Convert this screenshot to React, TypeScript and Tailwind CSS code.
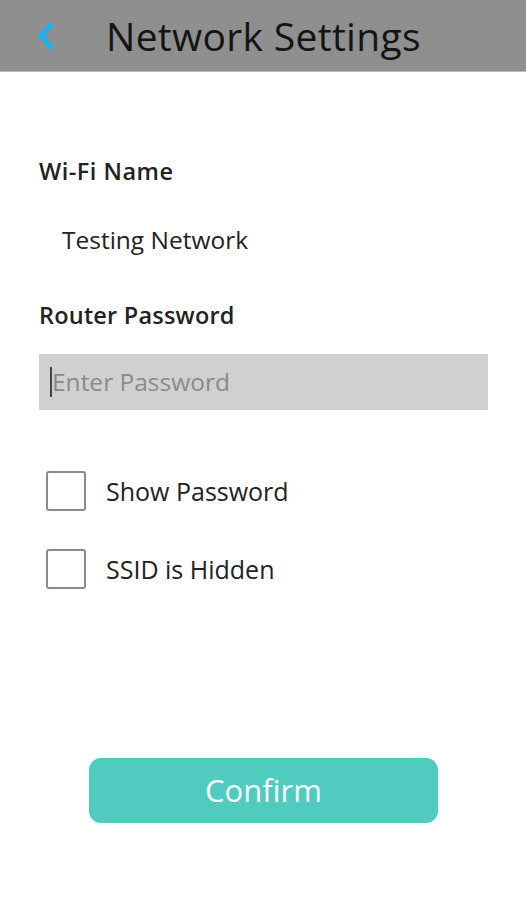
import React from "react";

export default function App() {
  return (
    <div className="w-[526px] h-[900px] bg-white flex flex-col" style={{ fontFamily: '"Open Sans", "Noto Sans", sans-serif' }}>
      <div className="h-[72px] bg-[#8f8f8f] flex items-center border-b border-[#bdbdbd]">
        <svg width="22" height="30" viewBox="0 0 22 30" className="ml-[35px]">
          <path d="M17 3 L6 15 L17 27" stroke="#1ab2f0" strokeWidth="5" fill="none" strokeLinejoin="miter" />
        </svg>
        <div className="ml-[49px] text-[39px] text-[#141414] leading-none tracking-[0.3px]">Network Settings</div>
      </div>
      <div className="px-[39px] flex flex-col">
        <div className="mt-[85px] text-[23.5px] font-semibold text-[#222] leading-[28px] tracking-[0.5px]">Wi-Fi Name</div>
        <div className="mt-[41px] ml-[23px] text-[24.5px] text-[#222] leading-[28px]">Testing Network</div>
        <div className="mt-[47px] text-[23.5px] font-semibold text-[#222] leading-[28px] tracking-[0.2px]">Router Password</div>
        <div className="mt-[25px] w-[449px] h-[56px] bg-[#d0d0d0] flex items-center pl-[11px]">
          <div className="w-[2px] h-[30px] bg-[#444]" />
          <span className="text-[24.5px] text-[#8a8a8a] leading-[28px]">Enter Password</span>
        </div>
        <div className="mt-[61px] flex items-center ml-[7px]">
          <div className="w-[40px] h-[40px] border-2 border-[#8a8a8a] rounded-[3px] bg-white" />
          <span className="ml-[20px] text-[25px] text-[#222] leading-[28px]">Show Password</span>
        </div>
        <div className="mt-[38px] flex items-center ml-[7px]">
          <div className="w-[40px] h-[40px] border-2 border-[#8a8a8a] rounded-[3px] bg-white" />
          <span className="ml-[20px] text-[25px] text-[#222] leading-[28px]">SSID is Hidden</span>
        </div>
      </div>
      <div className="mt-[169px] flex justify-center">
        <button className="w-[349px] h-[65px] ml-[1px] bg-[#4fcbc0] rounded-[12px] text-white text-[31px] flex items-center justify-center">Confirm</button>
      </div>
    </div>
  );
}
